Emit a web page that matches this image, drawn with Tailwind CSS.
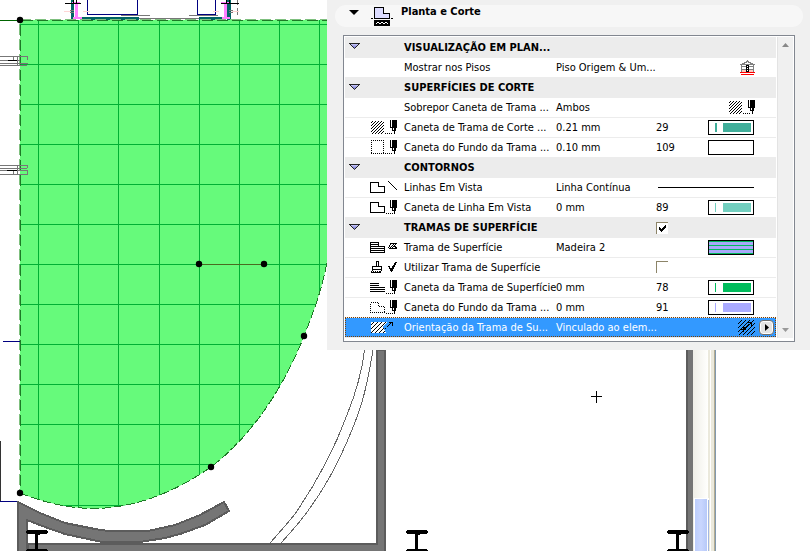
<!DOCTYPE html>
<html lang="pt">
<head>
<meta charset="utf-8">
<title>Planta e Corte</title>
<script src="https://cdn.jsdelivr.net/npm/@tailwindcss/browser@4"></script>
</head>
<body class="relative min-h-screen overflow-hidden bg-white text-[11px] leading-4 text-black font-['DejaVu_Sans_Condensed','Noto_Sans',sans-serif]">

<!-- Floor plan canvas -->
<svg class="absolute left-0 top-0" width="810" height="551" viewBox="0 0 810 551" shape-rendering="crispEdges" role="img" aria-label="Planta">
  <defs>
    <clipPath id="slab"><path d="M20 20V493C40 501 65 508 92 508.500C135 508.500 175 492 211 467C258 431 288 377 304 336C315 308 326 280 330 240V20Z"/></clipPath>
    <linearGradient id="track"><stop offset="0" stop-color="#efeee7"/><stop offset="1" stop-color="#fffffd"/></linearGradient>
    <linearGradient id="thumb"><stop offset="0" stop-color="#bccdfb"/><stop offset=".5" stop-color="#c9d6fe"/><stop offset="1" stop-color="#b7c9f8"/></linearGradient>
    <path id="beam" d="M1 0H21V1H22V3H21V4H14V5H12V19H21V20H22V21H0V20H1V19H9V4H1V3H0V1H1Z"/>
  </defs>
  <g clip-path="url(#slab)">
    <path fill="#66fa7b" d="M20 20H330V551H20Z"/>
    <path stroke="#00b034" fill="none" d="M38.500 20V551M78.500 20V551M118.500 20V551M159.500 20V551M199.500 20V551M239.500 20V551M279.500 20V551M319.500 20V551M20 24.500H330M20 64.500H330M20 104.500H330M20 144.500H330M20 184.500H330M20 224.500H330M20 264.500H330M20 304.500H330M20 344.500H330M20 384.500H330M20 424.500H330M20 464.500H330M20 505.500H330"/>
  </g>
  <!-- Structure above the slab -->
  <path fill="#006464" d="M71 0h3v20h-3zM81 17h58v3H81zM199 17h26v3h-26zM227 0h4v20h-4z"/>
  <path fill="#ff80ff" d="M75 2h3v16h-3zM72 2h8v2h-8zM73 17h9v2h-9zM224 2h3v16h-3zM221 2h8v2h-8zM222 17h8v2h-8z"/>
  <path stroke="#000080" fill="none" d="M87.500 0V14.500H137.500V0M197.500 0V14.500H215.500V0"/>
  <path stroke="#777" fill="none" d="M121 15.500h29M189 15.500h29M139 18.500h60M237.500 0v5M237.500 8v7M70 10.500h4M70 12.500h4M229 10.500h4M229 12.500h4"/>
  <path stroke="#ffd5d5" d="M64 11.500h7M83 11.500h7M213 11.500h6M232 11.500h7"/>
  <path stroke="#000" d="M65 3.500h16M221 3.500h18M73.500 0v3M76.500 0v3M226.500 0v3M229.500 0v3"/>
  <path stroke="#006400" d="M0 20.500h20"/>
  <path stroke="#7fc07f" fill="none" stroke-dasharray="11 4" d="M20 19.500H330M19.500 24V493"/>
  <path stroke="#1d7a26" fill="none" stroke-dasharray="11 4" d="M22 20.500H330M20.500 25V493"/>
  <path stroke="#1d7a26" fill="none" stroke-dasharray="9 3" d="M20 493C40 501 65 508 92 508.500C135 508.500 175 492 211 467C258 431 288 377 304 336C315 308 326 280 330 240"/>
  <!-- Window frames on the left -->
  <g stroke="#777" fill="none">
    <path d="M0 56.500H27.500V60M0 60.500H20M0 63.500H28M0 65.500H27M13.500 57v3M17.500 57v8"/>
    <path d="M0 165.500H27.500V168M0 168.500H27M0 170.500H27.500V174.500H0M13.500 171v3M17.500 165v9"/>
  </g>
  <path stroke="#000" d="M8 60.500h9M7 170.500h10"/>
  <path stroke="#000080" d="M3 341.500h17M0 501.500h17"/>
  <path stroke="#333" d="M.5 441v60"/>
  <!-- Walls -->
  <g fill="#757575" stroke="#5c5c5c" stroke-width="2">
    <path d="M28 544H377V350H385V560H28Z"/>
    <path d="M18 502L40 513L65 523L95 529L108 531H148L175 525L200 515L224 502L229 511L205 525L180 534L165 538L140 542H102L65 534L45 527L27 520V560H18Z"/>
  </g>
  <path fill="#757575" d="M688 350h5v201h-5z"/><path fill="#5c5c5c" d="M686 350h2v201h-2z"/>
  <path fill="none" stroke="#666" d="M364.500 350C362 372 355 395 347 415C334 450 317 482 295 514C287 524 278 534 270 543M373 350C369 373 365 396 357 417C345 449 330 480 312 505C303 519 292 531 281 543"/>
  <!-- Scroll bar of the drawing window -->
  <path fill="url(#track)" d="M693 350h15v201h-15z"/>
  <path fill="#ebe9dc" d="M708 350h2v201h-2zM711 350h3v201h-3z"/>
  <path fill="#b3ac92" d="M714 350h1v201h-1z"/><path fill="#8299ae" d="M715 350h1v201h-1z"/>
  <path fill="#fff" d="M694 498h15v53h-15z"/><path fill="url(#thumb)" d="M695 499h12v52h-12z"/><path fill="#a4b7e3" d="M708 500h1v51h-1z"/>
  <use href="#beam" x="26" y="530"/><use href="#beam" x="406" y="530"/><use href="#beam" x="667" y="530"/>
  <path stroke="#4a6a20" d="M199 264.500h65"/>
  <g shape-rendering="auto"><circle cx="20" cy="20" r="3.200"/><circle cx="20" cy="493" r="3.200"/><circle cx="211" cy="467" r="3.200"/><circle cx="304" cy="336" r="3.200"/><circle cx="199" cy="264" r="3.200"/><circle cx="264" cy="264" r="3.200"/></g>
  <path stroke="#000" d="M591 396.500h11M596.500 391v12"/>
</svg>

<!-- Shared icon shapes -->
<svg class="absolute" width="0" height="0" aria-hidden="true">
  <defs>
    <pattern id="diag" width="3" height="3" patternUnits="userSpaceOnUse"><path d="M2 0h1v1h-1zM1 1h1v1h-1zM0 2h1v1h-1z"/></pattern>
    <pattern id="diag4" width="4" height="4" patternUnits="userSpaceOnUse"><path d="M3 0h1v1h-1zM2 1h1v1h-1zM1 2h1v1h-1zM0 3h1v1h-1z"/></pattern>
    <linearGradient id="tri" x2="0" y2="1"><stop offset="0" stop-color="#d6d6ff"/><stop offset="1" stop-color="#6666cc"/></linearGradient>
    <g id="pen"><path d="M0 0h7v8h-1v3h-1v3h-1v-3h-2v-3h-2z"/><path fill="#fff" d="M1 0h1v7h-1zM3 8h1v2h-1z"/></g>
    <path id="shape" fill="none" stroke="#000" d="M.5 .5h8v4h6v6H.5z"/>
    <path id="dots" stroke="#000" stroke-dasharray="1 1" d="M16 13.500h8"/>
    <g id="down"><path d="M1 .5H10L5.500 5.500Z" fill="url(#tri)"/><path d="M0 .5H11M1 1L5.500 5.500L10 1" fill="none" stroke="#222"/></g>
  </defs>
</svg>

<aside class="relative ml-[327px] flex flex-col gap-2 bg-[#f0f0f0] pt-[5px] pr-[7px] pb-2 pl-2">
  <header>
    <button class="flex h-[22px] w-full items-center rounded-full bg-[#f7f7f7] pl-[14px] text-left font-bold">
      <svg width="10" height="5" viewBox="0 0 10 5" class="mb-2 shrink-0"><path d="M0 0H10L5 5Z"/></svg>
      <svg width="22" height="20" viewBox="0 0 22 20" class="ml-3 shrink-0" shape-rendering="crispEdges"><path fill="#dcdcff" stroke="#000" d="M3.500 1.500h9v6h6v5h-15z"/><path d="M0 12h2v1H0zM20 12h2v1h-2zM3 14h16v6H3z"/><path fill="none" stroke="#fff" d="M5 17.500l2-1l2 1l2-1l2 1l2-1l2 1"/></svg>
      <span class="mb-2 ml-2">Planta e Corte</span>
    </button>
  </header>

  <section class="mr-2 ml-2 flex border border-[#828790] bg-white pt-px pr-px pb-[3px] pl-px">
    <table class="w-full flex-1 table-fixed border-collapse whitespace-nowrap [&_span]:pt-[2px] [&_td]:p-0 [&_td:nth-child(2)]:pt-[2px] [&_td:nth-child(3)]:pt-[2px] [&_th]:p-0 [&_th]:pt-[2px] [&_th]:text-left [&_tr]:h-5 [&_tr]:border-b [&_tr]:border-[#ececec]">
      <colgroup><col class="w-[59px]"><col class="w-[152px]"><col class="w-[100px]"><col></colgroup>
      <tbody>
        <tr class="bg-[#ececec]">
          <td><button class="block pl-1" aria-label="Recolher"><svg width="12" height="7" viewBox="0 0 12 7"><use href="#down"/></svg></button></td>
          <th colspan="3">VISUALIZAÇÃO EM PLAN...</th>
        </tr>
        <tr>
          <td></td><td>Mostrar nos Pisos</td><td>Piso Origem &amp; Um...</td>
          <td><svg class="ml-[84px]" width="15" height="15" viewBox="0 0 15 15" shape-rendering="crispEdges"><path fill="#fff" d="M1 3h13v9H1z"/><path fill="#ffc8bc" d="M2 10h11v2H2z"/><path fill="none" stroke="#808080" d="M1.500 4v8M13.500 4v8M1 6.500h13M1 9.500h13M0 4.500h15M2 3.500h3M4 2.500h3M6 1.500h3M8 2.500h3M10 3.500h3M7 .5h1"/><path d="M6 5h3v7H6z"/><path fill="#fff" d="M7 6h1v1h-1zM7 8h1v1h-1zM7 10h1v1h-1z"/><path stroke="#f00" d="M0 12.500h15M1 14.500h13"/></svg></td>
        </tr>
        <tr class="bg-[#ececec]">
          <td><button class="block pl-1" aria-label="Recolher"><svg width="12" height="7" viewBox="0 0 12 7"><use href="#down"/></svg></button></td>
          <th colspan="3">SUPERFÍCIES DE CORTE</th>
        </tr>
        <tr>
          <td></td><td>Sobrepor Caneta de Trama ...</td><td>Ambos</td>
          <td><svg class="ml-[73px]" width="27" height="14" viewBox="0 0 27 14" shape-rendering="crispEdges"><path fill="url(#diag)" d="M0 1h13v13H0z"/><use href="#dots" x="-2"/><use href="#pen" x="19"/></svg></td>
        </tr>
        <tr>
          <td><svg class="ml-[26px]" width="27" height="14" viewBox="0 0 27 14" shape-rendering="crispEdges"><path fill="url(#diag)" d="M0 1h13v13H0z"/><use href="#dots" x="-2"/><use href="#pen" x="19"/></svg></td>
          <td>Caneta de Trama de Corte ...</td><td>0.21 mm</td>
          <td><div class="flex items-center"><span class="w-[52px]">29</span><svg width="46" height="15" viewBox="0 0 46 15" shape-rendering="crispEdges"><path fill="#fff" stroke="#000" d="M.5 .5h45v14H.5z"/><path fill="#40ae9a" d="M7 3h2v9H7zM15 3h28v9H15z"/></svg></div></td>
        </tr>
        <tr>
          <td><svg class="ml-[26px]" width="27" height="14" viewBox="0 0 27 14" shape-rendering="crispEdges"><path fill="none" stroke="#000" stroke-dasharray="1 1" d="M0 .5h13M.5 0v14M12.500 0v14M0 13.500h13"/><use href="#dots" x="-2"/><use href="#pen" x="19"/></svg></td>
          <td>Caneta do Fundo da Trama ...</td><td>0.10 mm</td>
          <td><div class="flex items-center"><span class="w-[52px]">109</span><svg width="46" height="15" viewBox="0 0 46 15" shape-rendering="crispEdges"><path fill="#fff" stroke="#000" d="M.5 .5h45v14H.5z"/></svg></div></td>
        </tr>
        <tr class="bg-[#ececec]">
          <td><button class="block pl-1" aria-label="Recolher"><svg width="12" height="7" viewBox="0 0 12 7"><use href="#down"/></svg></button></td>
          <th colspan="3">CONTORNOS</th>
        </tr>
        <tr>
          <td><svg class="ml-[25px]" width="28" height="14" viewBox="0 0 28 14" shape-rendering="crispEdges"><use href="#shape" y="2"/><path stroke="#000" d="M18 1L27 10"/></svg></td>
          <td>Linhas Em Vista</td><td>Linha Contínua</td>
          <td><div class="ml-[2px] h-px w-24 bg-black"></div></td>
        </tr>
        <tr>
          <td><svg class="ml-[25px]" width="28" height="14" viewBox="0 0 28 14" shape-rendering="crispEdges"><use href="#shape" y="2"/><use href="#dots"/><use href="#pen" x="20"/></svg></td>
          <td>Caneta de Linha Em Vista</td><td>0 mm</td>
          <td><div class="flex items-center"><span class="w-[52px]">89</span><svg width="46" height="15" viewBox="0 0 46 15" shape-rendering="crispEdges"><path fill="#fff" stroke="#000" d="M.5 .5h45v14H.5z"/><path fill="#72cfbf" d="M7 3h1v9H7zM15 3h28v9H15z"/></svg></div></td>
        </tr>
        <tr class="bg-[#ececec]">
          <td><button class="block pl-1" aria-label="Recolher"><svg width="12" height="7" viewBox="0 0 12 7"><use href="#down"/></svg></button></td>
          <th colspan="2"><label for="surface">TRAMAS DE SUPERFÍCIE</label></th>
          <td><div class="relative h-3 w-3"><input id="surface" type="checkbox" checked class="block h-3 w-3 appearance-none border-t border-l border-[#8c8468] bg-white"><svg class="pointer-events-none absolute top-[3px] left-[3px]" width="7" height="7" viewBox="0 0 7 7" shape-rendering="crispEdges"><path d="M0 2h1v1h1v1h1v-1h1v-1h1v-1h1v-1h1v3h-1v1h-1v1h-1v1h-1v1h-1v-1h-1v-1h-1z"/></svg></div></td>
        </tr>
        <tr>
          <td><svg class="ml-[25px]" width="28" height="14" viewBox="0 0 28 14" shape-rendering="crispEdges"><use href="#shape" y="2"/><path stroke="#000" d="M0 4.500h9M0 6.500h9M0 8.500h15M0 10.500h15"/><path fill="none" stroke="#000" d="M20 3.500h7M18.500 8.500h8M20.500 4L18.500 8M26.500 3L24.500 6L26.500 8"/><path stroke="#000" d="M20 8L24 4M22 8L25 5"/></svg></td>
          <td>Trama de Superfície</td><td>Madeira 2</td>
          <td><svg class="ml-[52px]" width="46" height="15" viewBox="0 0 46 15" shape-rendering="crispEdges"><path d="M0 0h46v15H0z"/><path fill="#00bc5c" d="M1 1h44v13H1z"/><path fill="#a8a8fa" d="M1 2h44v3H1zM1 6h44v3H1zM1 10h44v3H1z"/></svg></td>
        </tr>
        <tr>
          <td><svg class="ml-[26px]" width="27" height="14" viewBox="0 0 27 14" shape-rendering="crispEdges"><path fill="none" stroke="#000" d="M5.500 6V1.500h2V6M1.500 6.500h9v3h-9zM1.500 9L.5 12.500h9L10.500 9"/><path stroke="#000" stroke-dasharray="1 1" d="M2 11.500h8M3 12.500h7"/><path d="M17 6h2l1 3l4-7h2l-5 10h-1z"/></svg></td>
          <td colspan="2"><label for="use-fill">Utilizar Trama de Superfície</label></td>
          <td class="!pt-0"><input id="use-fill" type="checkbox" class="block h-3 w-3 appearance-none border-t border-l border-[#8c8468] bg-white"></td>
        </tr>
        <tr>
          <td><svg class="ml-[25px]" width="28" height="14" viewBox="0 0 28 14" shape-rendering="crispEdges"><path stroke="#000" d="M0 3.500h9M0 5.500h9M0 7.500h15M0 9.500h15M0 11.500h15"/><use href="#dots"/><use href="#pen" x="20"/></svg></td>
          <td>Caneta da Trama de Superfície</td><td>0 mm</td>
          <td><div class="flex items-center"><span class="w-[52px]">78</span><svg width="46" height="15" viewBox="0 0 46 15" shape-rendering="crispEdges"><path fill="#fff" stroke="#000" d="M.5 .5h45v14H.5z"/><path fill="#00bc5c" d="M7 3h1v9H7zM15 3h28v9H15z"/></svg></div></td>
        </tr>
        <tr>
          <td><svg class="ml-[25px]" width="28" height="14" viewBox="0 0 28 14" shape-rendering="crispEdges"><use href="#shape" y="2" stroke-dasharray="1 1"/><use href="#dots"/><use href="#pen" x="20"/></svg></td>
          <td>Caneta do Fundo da Trama ...</td><td>0 mm</td>
          <td><div class="flex items-center"><span class="w-[52px]">91</span><svg width="46" height="15" viewBox="0 0 46 15" shape-rendering="crispEdges"><path fill="#fff" stroke="#000" d="M.5 .5h45v14H.5z"/><path fill="#aaaaff" d="M7 3h1v9H7zM15 3h28v9H15z"/></svg></div></td>
        </tr>
        <tr class="bg-[#3399ff] text-white outline-1 -outline-offset-1 outline-dotted outline-[#804000]">
          <td><svg class="ml-[26px]" width="27" height="13" viewBox="0 0 27 13" shape-rendering="crispEdges"><path fill="#fff" d="M0 1h16l-4 5l3 6H0z"/><path fill="url(#diag4)" d="M0 1h16l-4 5l3 6H0z"/><path stroke="#000" stroke-dasharray="2 1" d="M14 8L20 2"/><path d="M18 1h4v4h-1v-3h-3z"/></svg></td>
          <td>Orientação da Trama de Su...</td><td>Vinculado ao elem...</td>
          <td><div class="flex items-center gap-1 pl-[82px]"><svg width="17" height="15" viewBox="0 0 17 15" shape-rendering="crispEdges"><path fill="url(#diag4)" d="M0 0h17v15H0z"/><path stroke="#000" d="M4 10L13 3M3 9.500h5M5.500 7v5"/><path d="M9 2h5v5h-1v-4h-4z"/></svg>
          <button aria-label="Abrir" class="flex h-[15px] w-[15px] items-center justify-center rounded-sm border border-[#707070] bg-[#e4e4e4] ring-1 ring-white ring-inset"><svg width="4" height="7" viewBox="0 0 4 7"><path d="M0 0L4 3.500L0 7Z"/></svg></button></div></td>
        </tr>
      </tbody>
    </table>
    <div class="ml-px flex w-4 shrink-0 flex-col items-center justify-between border-l border-[#e3e3e3] bg-[#f0f0f0] py-[6px]">
      <button aria-label="Subir" class="block"><svg width="7" height="4" viewBox="0 0 7 4" class="block"><path fill="#888" d="M0 4L3.500 0L7 4Z"/></svg></button>
      <button aria-label="Descer" class="block"><svg width="7" height="4" viewBox="0 0 7 4" class="block"><path fill="#999" d="M0 0L3.500 4L7 0Z"/></svg></button>
    </div>
  </section>
</aside>
</body>
</html>
